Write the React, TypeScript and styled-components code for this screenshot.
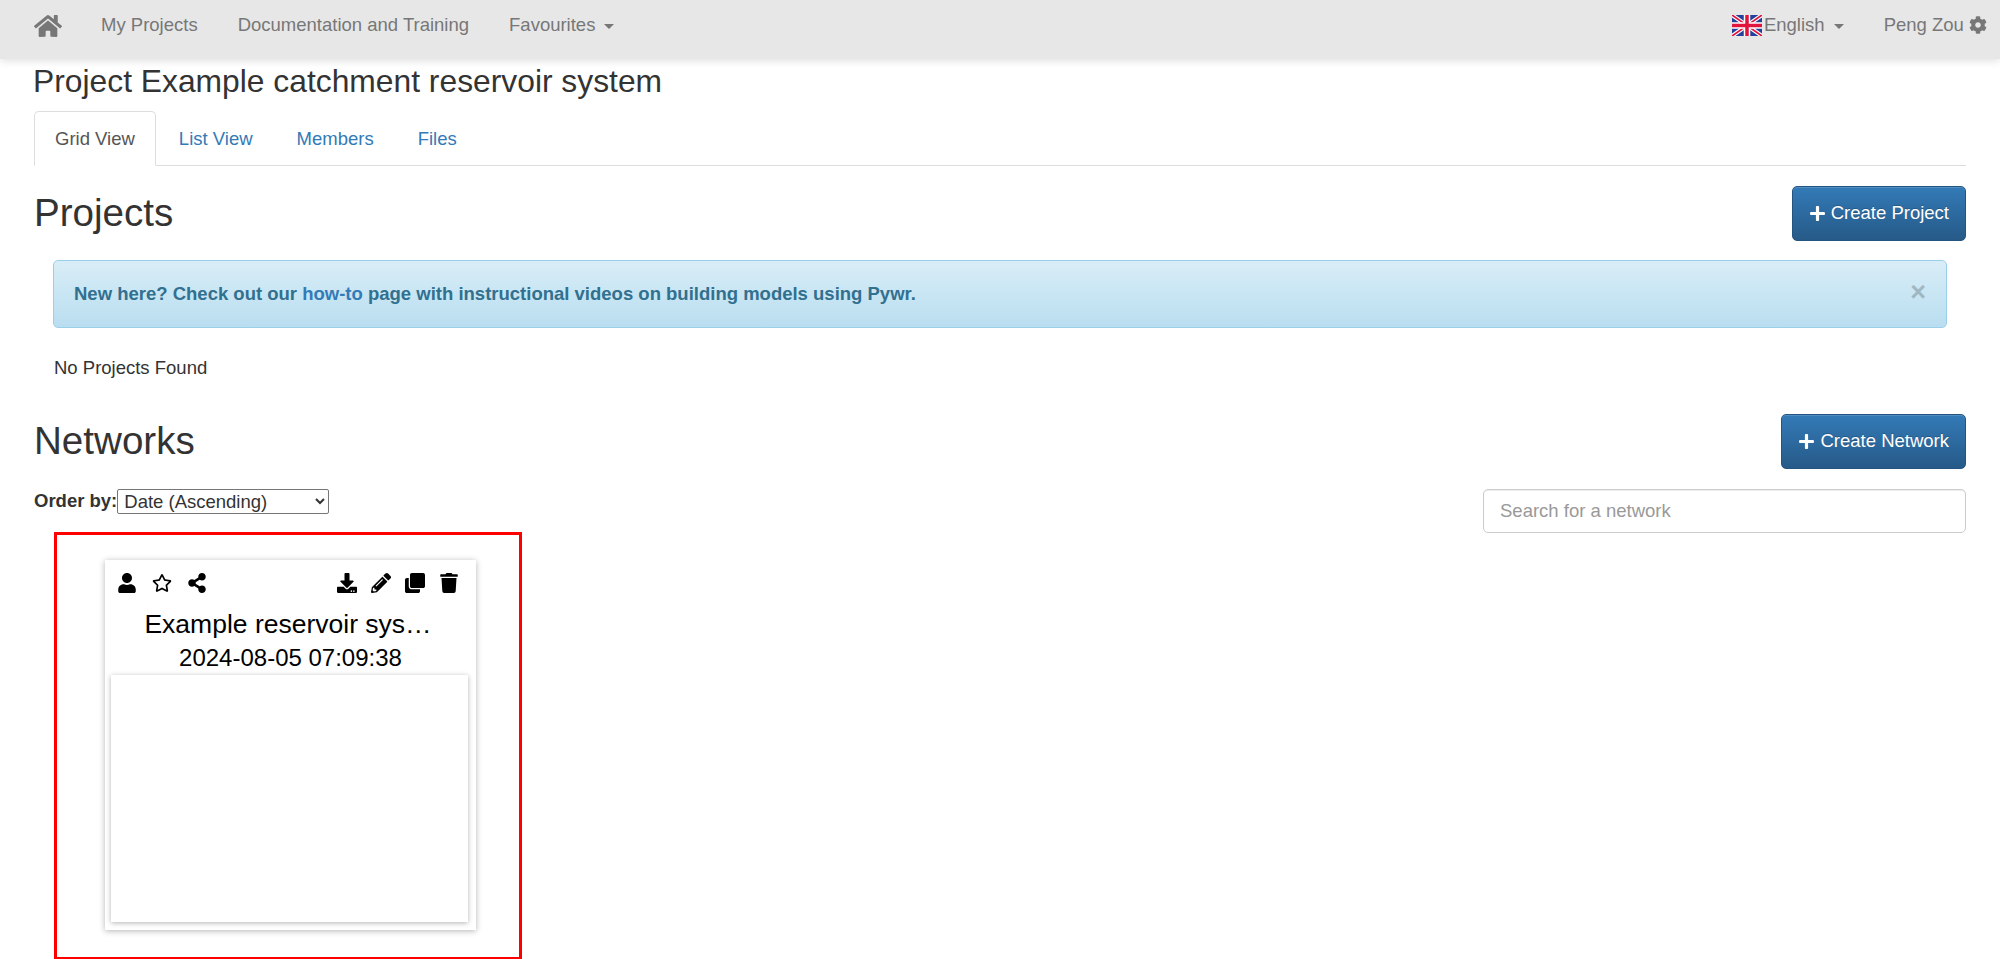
import { createGlobalStyle, styled } from 'styled-components';
import {
  FaClone,
  FaCog,
  FaDownload,
  FaHome,
  FaPencilAlt,
  FaPlus,
  FaRegStar,
  FaShareAlt,
  FaTrash,
  FaUser,
} from 'react-icons/fa';

const GlobalStyle = createGlobalStyle`
  html, body {
    margin: 0;
    height: 959px;
    overflow: hidden;
    background: #fff;
    color: #333;
    font-family: "Liberation Sans", Arial, sans-serif;
    font-size: 18.5px;
    line-height: 1.42857;
  }
  * { box-sizing: border-box; }
`;

const NavBar = styled.nav`
  height: 59px;
  padding: 0 13px 0 34px;
  display: flex;
  align-items: flex-start;
  justify-content: space-between;
  background: #e7e7e7;
  box-shadow: 0 2px 8px rgba(0, 0, 0, 0.12);
  position: relative;
`;

const NavGroup = styled.div`
  display: flex;
  align-items: center;
  height: 51px;
`;

const NavItem = styled.a<{ $gap?: number }>`
  color: #777;
  font-size: 18.5px;
  margin-left: ${(p) => p.$gap ?? 0}px;
  display: flex;
  align-items: center;
  white-space: nowrap;
`;

const Caret = styled.span`
  display: inline-block;
  width: 0;
  height: 0;
  margin-left: 9px;
  margin-top: 3px;
  border-top: 5px solid #777;
  border-left: 5px solid transparent;
  border-right: 5px solid transparent;
`;

const FlagIcon = styled.svg`
  width: 30px;
  height: 21px;
  margin-right: 2px;
`;

const Main = styled.main`
  padding: 0 34px;
`;

const PageTitle = styled.h3`
  margin: 0 0 0 -1px;
  height: 52px;
  font-size: 31.8px;
  font-weight: 400;
  line-height: 44px;
`;

const Tabs = styled.ul`
  list-style: none;
  margin: 0;
  padding: 0;
  height: 55px;
  display: flex;
  border-bottom: 1px solid #ddd;
`;

const Tab = styled.li<{ $active?: boolean }>`
  height: 55px;
  padding: 0 20px;
  margin-right: 2px;
  line-height: 54px;
  color: ${(p) => (p.$active ? '#555' : '#337ab7')};
  background: ${(p) => (p.$active ? '#fff' : 'transparent')};
  border: 1px solid ${(p) => (p.$active ? '#ddd' : 'transparent')};
  border-bottom-color: ${(p) => (p.$active ? '#fff' : 'transparent')};
  border-radius: 5px 5px 0 0;
`;

const SectionHead = styled.div<{ $top: number }>`
  display: flex;
  align-items: center;
  justify-content: space-between;
  margin-top: ${(p) => p.$top}px;
`;

const SectionTitle = styled.h2`
  margin: 0 0 1px;
  font-size: 38.6px;
  font-weight: 400;
  line-height: 1.1;
`;

const PrimaryButton = styled.button`
  height: 55px;
  padding: 0 16px;
  display: flex;
  align-items: center;
  gap: 5px;
  color: #fff;
  font: inherit;
  font-size: 18.5px;
  border: 1px solid #245580;
  border-radius: 5px;
  background: linear-gradient(to bottom, #337ab7 0, #265a88 100%);
  text-shadow: 0 -1px 0 rgba(0, 0, 0, 0.2);
  box-shadow: inset 0 1px 0 rgba(255, 255, 255, 0.15);
`;

const Alert = styled.div`
  margin: 19px 19px 0;
  height: 68px;
  padding: 0 20px;
  display: flex;
  align-items: center;
  justify-content: space-between;
  color: #31708f;
  font-weight: 700;
  border: 1px solid #9acfea;
  border-radius: 5px;
  background: linear-gradient(to bottom, #d9edf7 0, #b9def0 100%);
`;

const AlertLink = styled.a`
  color: #337ab7;
  font-weight: 700;
`;

const CloseMark = styled.span`
  color: #000;
  opacity: 0.2;
  font-size: 27px;
  line-height: 1;
  margin-bottom: 4px;
`;

const EmptyNote = styled.p`
  margin: 27px 0 0 20px;
  line-height: 26px;
`;

const NetworkBody = styled.div`
  display: flex;
  align-items: flex-start;
  justify-content: space-between;
  margin-top: 20px;
`;

const LeftColumn = styled.div`
  display: flex;
  flex-direction: column;
`;

const OrderRow = styled.div`
  display: flex;
  align-items: center;
  height: 25px;
`;

const OrderLabel = styled.label`
  font-weight: 700;
`;

const OrderSelect = styled.select`
  width: 212px;
  height: 25px;
  padding: 0 0 0 2px;
  font: inherit;
  font-size: 18.5px;
  line-height: 1;
  color: #333;
  background: #fff;
  border: 1px solid #767676;
  border-radius: 2px;
`;

const SearchInput = styled.input`
  width: 483px;
  height: 44px;
  padding: 8px 16px;
  font: inherit;
  font-size: 18.5px;
  color: #555;
  background: #fff;
  border: 1px solid #ccc;
  border-radius: 5px;
  box-shadow: inset 0 1px 1px rgba(0, 0, 0, 0.075);
  &::placeholder {
    color: #999;
    opacity: 1;
  }
`;

const Highlight = styled.section`
  width: 468px;
  height: 428px;
  margin: 18px 0 0 20px;
  padding: 25px 0 0 48px;
  border: 3px solid #f00;
`;

const Card = styled.article`
  width: 371px;
  height: 370px;
  padding: 0 6px;
  display: flex;
  flex-direction: column;
  background: #fff;
  color: #000;
  box-shadow: 0 1px 6px rgba(0, 0, 0, 0.3);
`;

const CardTools = styled.div`
  display: flex;
  justify-content: space-between;
  padding: 13px 11px 0 6px;
  height: 46px;
`;

const ToolGroup = styled.div<{ $gap: number }>`
  display: flex;
  gap: ${(p) => p.$gap}px;
  font-size: 20px;
`;

const CardTitle = styled.div`
  padding-right: 5px;
  text-align: center;
  font-size: 26.5px;
  line-height: 36px;
  white-space: nowrap;
`;

const CardDate = styled.div`
  text-align: center;
  font-size: 24px;
  line-height: 32px;
  height: 33px;
`;

const Preview = styled.div`
  width: 357px;
  height: 247px;
  background: #fff;
  box-shadow: 0 1px 5px rgba(0, 0, 0, 0.3);
`;

const UkFlag = () => (
  <FlagIcon viewBox="0 0 60 42" preserveAspectRatio="none">
    <rect width="60" height="42" fill="#27409a" />
    <path d="M0 0L60 42M60 0L0 42" stroke="#fff" strokeWidth="8" />
    <path d="M0 0L60 42M60 0L0 42" stroke="#e0143c" strokeWidth="3.5" />
    <path d="M30 0V42M0 21H60" stroke="#fff" strokeWidth="13" />
    <path d="M30 0V42M0 21H60" stroke="#e0143c" strokeWidth="7" />
  </FlagIcon>
);

export default function App() {
  return (
    <>
      <GlobalStyle />
      <NavBar>
        <NavGroup>
          <NavItem><FaHome size={28} /></NavItem>
          <NavItem $gap={39}>My Projects</NavItem>
          <NavItem $gap={40}>Documentation and Training</NavItem>
          <NavItem $gap={40}>Favourites<Caret /></NavItem>
        </NavGroup>
        <NavGroup>
          <NavItem><UkFlag />English<Caret /></NavItem>
          <NavItem $gap={40}>
            Peng Zou&nbsp;<FaCog size={18} />
          </NavItem>
        </NavGroup>
      </NavBar>
      <Main>
        <PageTitle>Project Example catchment reservoir system</PageTitle>
        <Tabs>
          <Tab $active>Grid View</Tab>
          <Tab>List View</Tab>
          <Tab>Members</Tab>
          <Tab>Files</Tab>
        </Tabs>
        <SectionHead $top={20}>
          <SectionTitle>Projects</SectionTitle>
          <PrimaryButton><FaPlus size={17} />Create Project</PrimaryButton>
        </SectionHead>
        <Alert>
          <span>
            New here? Check out our <AlertLink>how-to</AlertLink> page with instructional videos on building models using Pywr.
          </span>
          <CloseMark>×</CloseMark>
        </Alert>
        <EmptyNote>No Projects Found</EmptyNote>
        <SectionHead $top={33}>
          <SectionTitle>Networks</SectionTitle>
          <PrimaryButton><FaPlus size={17} />Create Network</PrimaryButton>
        </SectionHead>
        <NetworkBody>
          <LeftColumn>
            <OrderRow>
              <OrderLabel>Order by:</OrderLabel>
              <OrderSelect defaultValue="asc">
                <option value="asc">Date (Ascending)</option>
              </OrderSelect>
            </OrderRow>
            <Highlight>
              <Card>
                <CardTools>
                  <ToolGroup $gap={15}>
                    <FaUser />
                    <FaRegStar />
                    <FaShareAlt />
                  </ToolGroup>
                  <ToolGroup $gap={14}>
                    <FaDownload />
                    <FaPencilAlt />
                    <FaClone />
                    <FaTrash />
                  </ToolGroup>
                </CardTools>
                <CardTitle>Example reservoir sys…</CardTitle>
                <CardDate>2024-08-05 07:09:38</CardDate>
                <Preview />
              </Card>
            </Highlight>
          </LeftColumn>
          <SearchInput placeholder="Search for a network" />
        </NetworkBody>
      </Main>
    </>
  );
}
